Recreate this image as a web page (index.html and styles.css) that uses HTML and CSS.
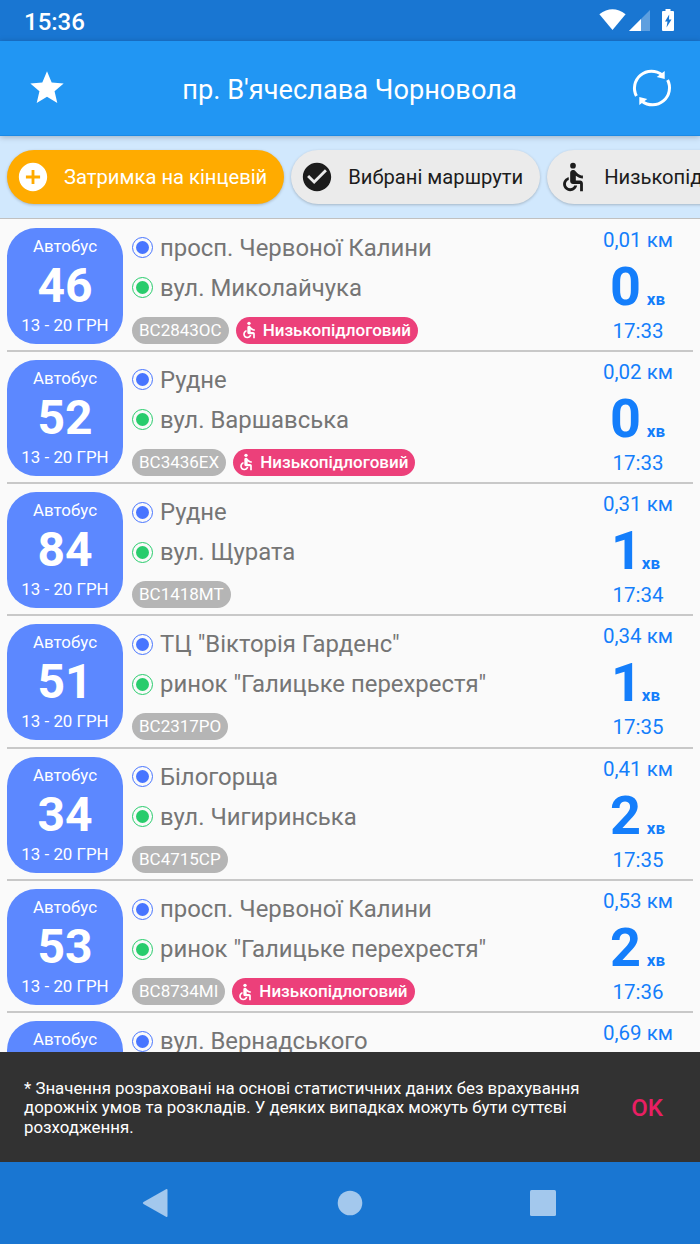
FILE: index.html
```
<!DOCTYPE html>
<html lang="uk">
<head>
<meta charset="UTF-8">
<title>пр. В'ячеслава Чорновола</title>
<link rel="stylesheet" href="styles.css">
</head>
<body>
	<svg class="sprite">
		<symbol id="wheelchair" viewBox="0 0 24 24">
			<circle cx="12" cy="4" r="2"/>
			<path d="M19 13v-2c-1.54.02-3.09-.75-4.07-1.83l-1.29-1.43c-.17-.19-.38-.34-.61-.45-.01 0-.01-.01-.02-.01H13c-.35-.2-.75-.3-1.19-.26C10.76 7.11 10 8.04 10 9.09V15c0 1.1.9 2 2 2h5v5h2v-5.5c0-1.1-.9-2-2-2h-3v-3.45c1.29 1.07 3.25 1.94 5 1.95zm-6.17 5c-.41 1.16-1.52 2-2.83 2-1.66 0-3-1.34-3-3 0-1.31.84-2.41 2-2.83V12.1c-2.28.46-4 2.48-4 4.9 0 2.76 2.24 5 5 5 2.42 0 4.44-1.72 4.9-4h-2.07z"/>
		</symbol>
	</svg>
	<div class="screen">
		<div class="statusbar">
			<span class="clock">15:36</span>
			<svg class="status-icons" width="80" height="26" viewBox="0 0 80 26">
				<path fill="#fff" d="M2.400 6.200Q15.500-3.600 28.600 6.200L15.500 22z"/>
				<path fill="#fff" fill-opacity=".3" d="M53 2v21H32z"/>
				<path fill="#fff" d="M44 11v12H32z"/>
				<path fill="#fff" fill-rule="evenodd" d="M68.500 1h5v2h2.500q1 0 1 1v18q0 1-1 1H66q-1 0-1-1V4q0-1 1-1h2.500zM72.200 6.500l-4.200 7h2.500l-1 6 5-8H72z"/>
			</svg>
		</div>
		<header class="toolbar">
			<svg class="star" width="40" height="40" viewBox="0 0 24 24"><path fill="#fff" d="M12 17.270L18.180 21l-1.640-7.030L22 9.240l-7.190-.61L12 2 9.190 8.630 2 9.240l5.460 4.730L5.820 21z"/></svg>
			<h1>пр. В'ячеслава Чорновола</h1>
			<svg class="refresh" width="40" height="40" viewBox="0 0 40 40">
				<path fill="none" stroke="#fff" stroke-width="3" d="M4.400 28A17 17 0 0 1 30 6.800M35.600 12A17 17 0 0 1 10 33.200"/>
				<path fill="#fff" d="M32.700 3v8l-8-2zM7.300 37v-8l8 2z"/>
			</svg>
		</header>
		<div class="filters">
			<div class="chip chip-on">
				<svg width="34" height="34" viewBox="0 0 24 24"><path d="M12 2C6.480 2 2 6.480 2 12s4.480 10 10 10 10-4.480 10-10S17.520 2 12 2zm5 11h-4v4h-2v-4H7v-2h4V7h2v4h4v2z"/></svg>
				<span>Затримка на кінцевій</span>
			</div>
			<div class="chip">
				<svg width="34" height="34" viewBox="0 0 24 24"><path d="M12 2C6.480 2 2 6.480 2 12s4.480 10 10 10 10-4.480 10-10S17.520 2 12 2zm-2 15l-5-5 1.410-1.410L10 14.170l7.590-7.590L19 8l-9 9z"/></svg>
				<span>Вибрані маршрути</span>
			</div>
			<div class="chip">
				<svg width="34" height="34"><use href="#wheelchair"/></svg>
				<span>Низькопідлоговий</span>
			</div>
		</div>
		<div class="list">
			<div class="row">
				<div class="route"><span>Автобус</span><b>46</b><span>13 - 20 ГРН</span></div>
				<div class="info">
					<p class="stop">просп. Червоної Калини</p>
					<p class="stop end">вул. Миколайчука</p>
					<div class="tags"><span class="plate">BC2843OC</span><span class="low"><svg width="20" height="20"><use href="#wheelchair"/></svg>Низькопідлоговий</span></div>
				</div>
				<div class="time"><span>0,01 км</span><div class="min"><b>0</b><i>хв</i></div><span>17:33</span></div>
			</div>
			<div class="row">
				<div class="route"><span>Автобус</span><b>52</b><span>13 - 20 ГРН</span></div>
				<div class="info">
					<p class="stop">Рудне</p>
					<p class="stop end">вул. Варшавська</p>
					<div class="tags"><span class="plate">BC3436EX</span><span class="low"><svg width="20" height="20"><use href="#wheelchair"/></svg>Низькопідлоговий</span></div>
				</div>
				<div class="time"><span>0,02 км</span><div class="min"><b>0</b><i>хв</i></div><span>17:33</span></div>
			</div>
			<div class="row">
				<div class="route"><span>Автобус</span><b>84</b><span>13 - 20 ГРН</span></div>
				<div class="info">
					<p class="stop">Рудне</p>
					<p class="stop end">вул. Щурата</p>
					<div class="tags"><span class="plate">BC1418MT</span></div>
				</div>
				<div class="time"><span>0,31 км</span><div class="min one"><b>1</b><i>хв</i></div><span>17:34</span></div>
			</div>
			<div class="row">
				<div class="route"><span>Автобус</span><b>51</b><span>13 - 20 ГРН</span></div>
				<div class="info">
					<p class="stop">ТЦ "Вікторія Гарденс"</p>
					<p class="stop end">ринок "Галицьке перехрестя"</p>
					<div class="tags"><span class="plate">BC2317PO</span></div>
				</div>
				<div class="time"><span>0,34 км</span><div class="min one"><b>1</b><i>хв</i></div><span>17:35</span></div>
			</div>
			<div class="row">
				<div class="route"><span>Автобус</span><b>34</b><span>13 - 20 ГРН</span></div>
				<div class="info">
					<p class="stop">Білогорща</p>
					<p class="stop end">вул. Чигиринська</p>
					<div class="tags"><span class="plate">BC4715CP</span></div>
				</div>
				<div class="time"><span>0,41 км</span><div class="min"><b>2</b><i>хв</i></div><span>17:35</span></div>
			</div>
			<div class="row">
				<div class="route"><span>Автобус</span><b>53</b><span>13 - 20 ГРН</span></div>
				<div class="info">
					<p class="stop">просп. Червоної Калини</p>
					<p class="stop end">ринок "Галицьке перехрестя"</p>
					<div class="tags"><span class="plate">BC8734MI</span><span class="low"><svg width="20" height="20"><use href="#wheelchair"/></svg>Низькопідлоговий</span></div>
				</div>
				<div class="time"><span>0,53 км</span><div class="min"><b>2</b><i>хв</i></div><span>17:36</span></div>
			</div>
			<div class="row">
				<div class="route"><span>Автобус</span></div>
				<div class="info">
					<p class="stop">вул. Вернадського</p>
				</div>
				<div class="time"><span>0,69 км</span></div>
			</div>
		</div>
		<div class="snackbar">
			<p>* Значення розраховані на основі статистичних даних без врахування<br>дорожніх умов та розкладів. У деяких випадках можуть бути суттєві<br>розходження.</p>
			<button>OK</button>
		</div>
		<nav class="navbar">
			<svg width="28" height="30" viewBox="0 0 28 30"><path d="M25 1.300q1.500-.8 1.500.8v25.800q0 1.600-1.500.8L2.500 16q-1.500-1 0-2z"/></svg>
			<svg width="26" height="26" viewBox="0 0 26 26"><circle cx="13" cy="13" r="12.300"/></svg>
			<svg width="26" height="26" viewBox="0 0 26 26"><rect width="26" height="26" rx="1.500"/></svg>
		</nav>
	</div>
</body>
</html>
```

FILE: styles.css
```
body {
	margin: 0;
	font-family: Roboto, "Noto Sans", sans-serif;
}

.sprite {
	display: none;
}

.screen {
	display: flex;
	flex-direction: column;
	width: 700px;
	height: 1244px;
	overflow: hidden;
	background-color: #fafafa;
}

.statusbar {
	display: flex;
	justify-content: space-between;
	align-items: center;
	height: 41px;
	flex: none;
	box-sizing: border-box;
	padding: 2px 23px 0 24px;
	background-color: #1976d2;
	color: #fff;
}

.clock {
	font-size: 24px;
	font-weight: 500;
}

.status-icons {
	margin-top: -2px;
}

.toolbar {
	display: flex;
	justify-content: space-between;
	align-items: center;
	height: 95px;
	flex: none;
	box-sizing: border-box;
	padding: 0 28px 0 27px;
	background-color: #2196f3;
	border-bottom: 1px solid #1a8ae6;
	color: #fff;
	z-index: 1;
	box-shadow: 0 1px 6px rgba(0, 0, 0, .25);
}

.toolbar h1 {
	margin: 4px 0 0;
	font-size: 27.200px;
	font-weight: 400;
}

.filters {
	display: flex;
	gap: 7px;
	height: 83px;
	flex: none;
	box-sizing: border-box;
	padding: 14px 0 0 7px;
	background-color: #d1e8fd;
	border-bottom: 1px solid #c0c0c0;
	overflow: hidden;
}

.chip {
	display: flex;
	align-items: center;
	gap: 14px;
	flex: none;
	height: 54px;
	box-sizing: border-box;
	padding: 0 17px 0 9px;
	border-radius: 27px;
	background-color: #ebebeb;
	color: #1c1c1c;
	fill: #1c1c1c;
	font-size: 20.200px;
	white-space: nowrap;
	box-shadow: 0 1px 3px rgba(0, 0, 0, .22);
}

.chip-on {
	background-color: #ffab00;
	color: #fff;
	fill: #fff;
}

.list {
	flex: 1;
	min-height: 0;
	overflow: hidden;
	padding: .6px 7px 0;
}

.row {
	display: flex;
	height: 132.300px;
	box-sizing: border-box;
	padding-top: 8px;
	border-bottom: 2px solid #c8c8c8;
}

.route {
	display: flex;
	flex-direction: column;
	align-items: center;
	width: 116px;
	height: 116px;
	flex: none;
	box-sizing: border-box;
	padding-top: 8px;
	border-radius: 29px;
	background-color: #5c88ff;
	color: #fff;
	font-size: 16.900px;
	line-height: 20px;
}

.route b {
	font-size: 48px;
	line-height: 59px;
}

.info {
	flex: 1;
	padding-left: 9px;
}

.stop {
	display: flex;
	align-items: center;
	gap: 7px;
	height: 40px;
	margin: 0;
	color: #757575;
	font-size: 23.900px;
	white-space: nowrap;
}

.stop::before {
	content: "";
	width: 13px;
	height: 13px;
	padding: 3px;
	border: 1px solid #4875ff;
	border-radius: 50%;
	background: #4875ff content-box;
	background-clip: content-box;
}

.stop.end::before {
	border-color: #28cc6c;
	background-color: #28cc6c;
}

.tags {
	display: flex;
	gap: 7px;
	margin-top: 9px;
	color: #fff;
	font-size: 17px;
	line-height: 27px;
}

.plate {
	padding: 0 7px;
	border-radius: 14px;
	background-color: #b5b5b5;
}

.low {
	display: flex;
	align-items: center;
	gap: 4px;
	padding: 0 7px 0 3px;
	border-radius: 14px;
	background-color: #ec407a;
	fill: #fff;
	font-weight: 500;
}

.time {
	display: flex;
	flex-direction: column;
	align-items: center;
	width: 110px;
	color: #147efb;
	font-size: 20.500px;
	line-height: 24px;
}

.min {
	display: flex;
	align-items: baseline;
	gap: 6px;
	height: 67px;
	padding-right: 1px;
	line-height: 69px;
}

.min b {
	font-size: 54px;
}

.min i {
	font-size: 17px;
	font-style: normal;
	font-weight: 700;
	line-height: 20px;
	padding-top: 1px;
}

.min.one {
	gap: 0;
	padding-right: 5px;
}

.snackbar {
	display: flex;
	justify-content: space-between;
	align-items: center;
	height: 110px;
	flex: none;
	box-sizing: border-box;
	padding: 2px 37px 0 24px;
	background-color: #323232;
	color: #fff;
}

.snackbar p {
	margin: 0;
	font-size: 16.820px;
	line-height: 19.500px;
	white-space: nowrap;
}

.snackbar button {
	padding: 0;
	border: none;
	background: none;
	color: #e91e63;
	font: 500 24px Roboto, sans-serif;
}

.navbar {
	display: flex;
	justify-content: space-between;
	align-items: center;
	height: 82px;
	flex: none;
	box-sizing: border-box;
	padding: 0 144px 0 141px;
	background-color: #1976d2;
	fill: #a3c8ed;
}
```
